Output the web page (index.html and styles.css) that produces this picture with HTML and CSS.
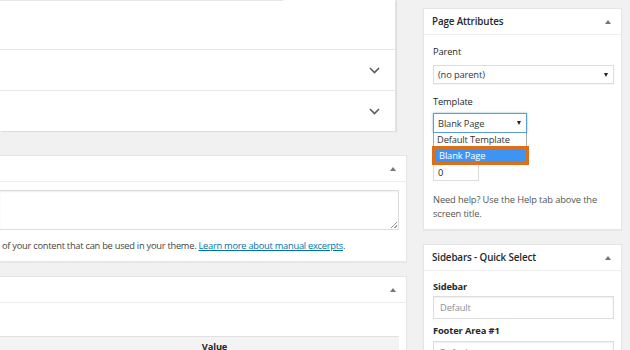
FILE: index.html
```html
<!DOCTYPE html>
<html>
<head>
<meta charset="utf-8">
<link rel="stylesheet" href="styles.css">
</head>
<body>
<div class="page">
  <div class="main">
    <div class="editor">
      <div class="editor-top"><div class="strip"></div></div>
      <div class="toggle-row">
        <svg class="chev" width="11" height="7" viewBox="0 0 11 7"><path d="M1 1l4.5 4.5L10 1" fill="none" stroke="#555d66" stroke-width="1.6"/></svg>
      </div>
      <div class="toggle-row">
        <svg class="chev" width="11" height="7" viewBox="0 0 11 7"><path d="M1 1l4.5 4.5L10 1" fill="none" stroke="#555d66" stroke-width="1.6"/></svg>
      </div>
    </div>

    <div class="postbox excerpt">
      <div class="pb-head"><span class="tri-up"></span></div>
      <div class="pb-body">
        <div class="textarea"><span class="grip"></span></div>
        <p class="excerpt-note">of your content that can be used in your theme. <a href="#">Learn more about manual excerpts</a>.</p>
      </div>
    </div>

    <div class="postbox custom">
      <div class="pb-head"><span class="tri-up"></span></div>
      <div class="pb-body table-body">
        <div class="table-head">Value</div>
      </div>
    </div>
  </div>

  <div class="side">
    <div class="sidebox attrs">
      <div class="sb-head"><span class="sb-title">Page Attributes</span><span class="tri-up"></span></div>
      <div class="sb-body">
        <div class="label">Parent</div>
        <div class="select wide"><span>(no parent)</span><span class="tri-down"></span></div>
        <div class="label tmpl">Template</div>
        <div class="template-wrap">
          <div class="select narrow focus"><span>Blank Page</span><span class="tri-down"></span></div>
          <div class="order-space"></div>
          <div class="num-input">0</div>
          <div class="dropdown">
            <div class="opt">Default Template</div>
            <div class="opt sel">Blank Page</div>
          </div>
        </div>
        <p class="help">Need help? Use the Help tab above the screen title.</p>
      </div>
    </div>

    <div class="sidebox quick">
      <div class="sb-head"><span class="sb-title">Sidebars - Quick Select</span><span class="tri-up"></span></div>
      <div class="sb-body">
        <div class="label strong">Sidebar</div>
        <div class="text-input">Default</div>
        <div class="label strong footer">Footer Area #1</div>
        <div class="text-input second">Default</div>
      </div>
    </div>
  </div>
</div>
</body>
</html>
```

FILE: styles.css
```css
html, body {
  margin: 0;
  padding: 0;
}
body {
  background: #f1f1f1;
  font-family: "Open Sans", "Noto Sans", sans-serif;
  font-size: 9.3px;
  letter-spacing: -0.12px;
  color: #23282d;
  width: 630px;
  height: 350px;
  overflow: hidden;
}
.page {
  display: flex;
  align-items: flex-start;
  height: 350px;
  overflow: hidden;
}
.main {
  width: 407px;
  flex: none;
  display: flex;
  flex-direction: column;
}
.editor {
  width: 396px;
  background: #fff;
  box-shadow: 1px 1px 1px rgba(0,0,0,0.08);
  border-right: 1px solid #e2e4e7;
  box-sizing: border-box;
}
.editor-top {
  height: 49px;
}
.strip {
  width: 283px;
  height: 1px;
  background: #e6e6e6;
}
.toggle-row {
  height: 40px;
  border-top: 1px solid #e6e6e6;
  display: flex;
  align-items: center;
  justify-content: flex-end;
  padding-right: 15px;
}
.chev {
  display: block;
}
.postbox {
  background: #fff;
  border: 1px solid #e5e5e5;
  border-left: none;
  box-shadow: 0 1px 1px rgba(0,0,0,0.04);
}
.excerpt {
  margin-top: 24px;
}
.custom {
  margin-top: 14px;
}
.pb-head {
  height: 25px;
  border-bottom: 1px solid #eee;
  display: flex;
  align-items: center;
  justify-content: flex-end;
  padding-right: 10px;
}
.tri-up {
  width: 0;
  height: 0;
  border-left: 3px solid transparent;
  border-right: 3px solid transparent;
  border-bottom: 4px solid #72777c;
}
.tri-down {
  width: 0;
  height: 0;
  border-left: 2.5px solid transparent;
  border-right: 2.5px solid transparent;
  border-top: 4px solid #222;
}
.pb-body {
  padding: 8px 0 8px 0;
}
.textarea {
  width: 399px;
  height: 40px;
  box-sizing: border-box;
  border: 1px solid #ddd;
  border-left: none;
  box-shadow: inset 0 1px 2px rgba(0,0,0,0.07);
  position: relative;
}
.grip {
  position: absolute;
  right: 1px;
  bottom: 1px;
  width: 6px;
  height: 6px;
  background: linear-gradient(135deg, transparent 45%, #999 45%, #999 55%, transparent 55%, transparent 75%, #999 75%, #999 85%, transparent 85%);
}
.excerpt-note {
  margin: 9px 0 0 2px;
  line-height: 14px;
  color: #444;
  white-space: nowrap;
  letter-spacing: -0.26px;
}
.excerpt-note a {
  color: #0073aa;
  text-decoration: underline;
}
.table-body {
  padding-top: 33px;
}
.table-head {
  width: 399px;
  height: 20px;
  box-sizing: border-box;
  background: #f3f3f3;
  border-top: 1px solid #e1e1e1;
  text-align: center;
  font-weight: 700;
  line-height: 20px;
  padding-left: 30px;
}
.side {
  margin-left: 16px;
  width: 199px;
  flex: none;
}
.sidebox {
  background: #fff;
  border: 1px solid #e5e5e5;
  box-shadow: 0 1px 1px rgba(0,0,0,0.04);
}
.attrs {
  margin-top: 8px;
}
.quick {
  margin-top: 14px;
}
.sb-head {
  height: 25px;
  border-bottom: 1px solid #eee;
  display: flex;
  align-items: center;
  justify-content: space-between;
  padding: 0 10px 0 8px;
}
.sb-title {
  font-size: 9.8px;
  font-weight: 600;
}
.sb-body {
  padding: 0 8px 8px 9px;
}
.label {
  line-height: 14px;
  margin-top: 10px;
  font-weight: 500;
}
.label.strong {
  font-weight: 700;
  margin-top: 9px;
}
.label.footer {
  margin-top: 5px;
}
.select {
  height: 19px;
  box-sizing: border-box;
  border: 1px solid #ddd;
  display: flex;
  align-items: center;
  justify-content: space-between;
  padding: 0 5px 0 4px;
  margin-top: 6px;
  color: #32373c;
  box-shadow: 0 1px 1px rgba(0,0,0,0.04);
}
.select.wide {
  width: 181px;
}
.select.narrow {
  width: 94px;
  height: 20px;
  margin-top: 4px;
}
.select.focus {
  border-color: #5b9dd9;
  box-shadow: 0 0 2px rgba(30,140,190,0.6);
}
.label.tmpl {
  margin-top: 11px;
}
.template-wrap {
  position: relative;
}
.order-space {
  height: 30px;
}
.num-input {
  width: 46px;
  height: 17px;
  box-sizing: border-box;
  border: 1px solid #ddd;
  line-height: 15px;
  padding-left: 4px;
  margin-top: 1px;
}
.dropdown {
  position: absolute;
  left: 0;
  top: 20px;
  width: 94px;
  box-sizing: border-box;
  background: #fff;
  border: 1px solid #aaa;
  border-top: none;
  border-bottom: none;
}
.opt {
  height: 14px;
  line-height: 14px;
  padding-left: 3px;
  white-space: nowrap;
  color: #333;
}
.opt.sel {
  background: #3c95f5;
  color: #fff;
  height: 13px;
  line-height: 13px;
  margin: 0 -3px 0 -2px;
  padding-left: 4px;
  border: 3px solid #dd6f19;
  margin-top: -1px;
}
.help {
  margin: 12px 0 0 0;
  line-height: 14px;
  color: #555;
}
.text-input {
  width: 181px;
  height: 23px;
  box-sizing: border-box;
  border: 1px solid #ddd;
  margin-top: 2px;
  color: #8a8f94;
  line-height: 21px;
  padding-left: 6px;
  box-shadow: inset 0 1px 2px rgba(0,0,0,0.07);
}
.text-input.second {
  margin-top: 3px;
}
```
